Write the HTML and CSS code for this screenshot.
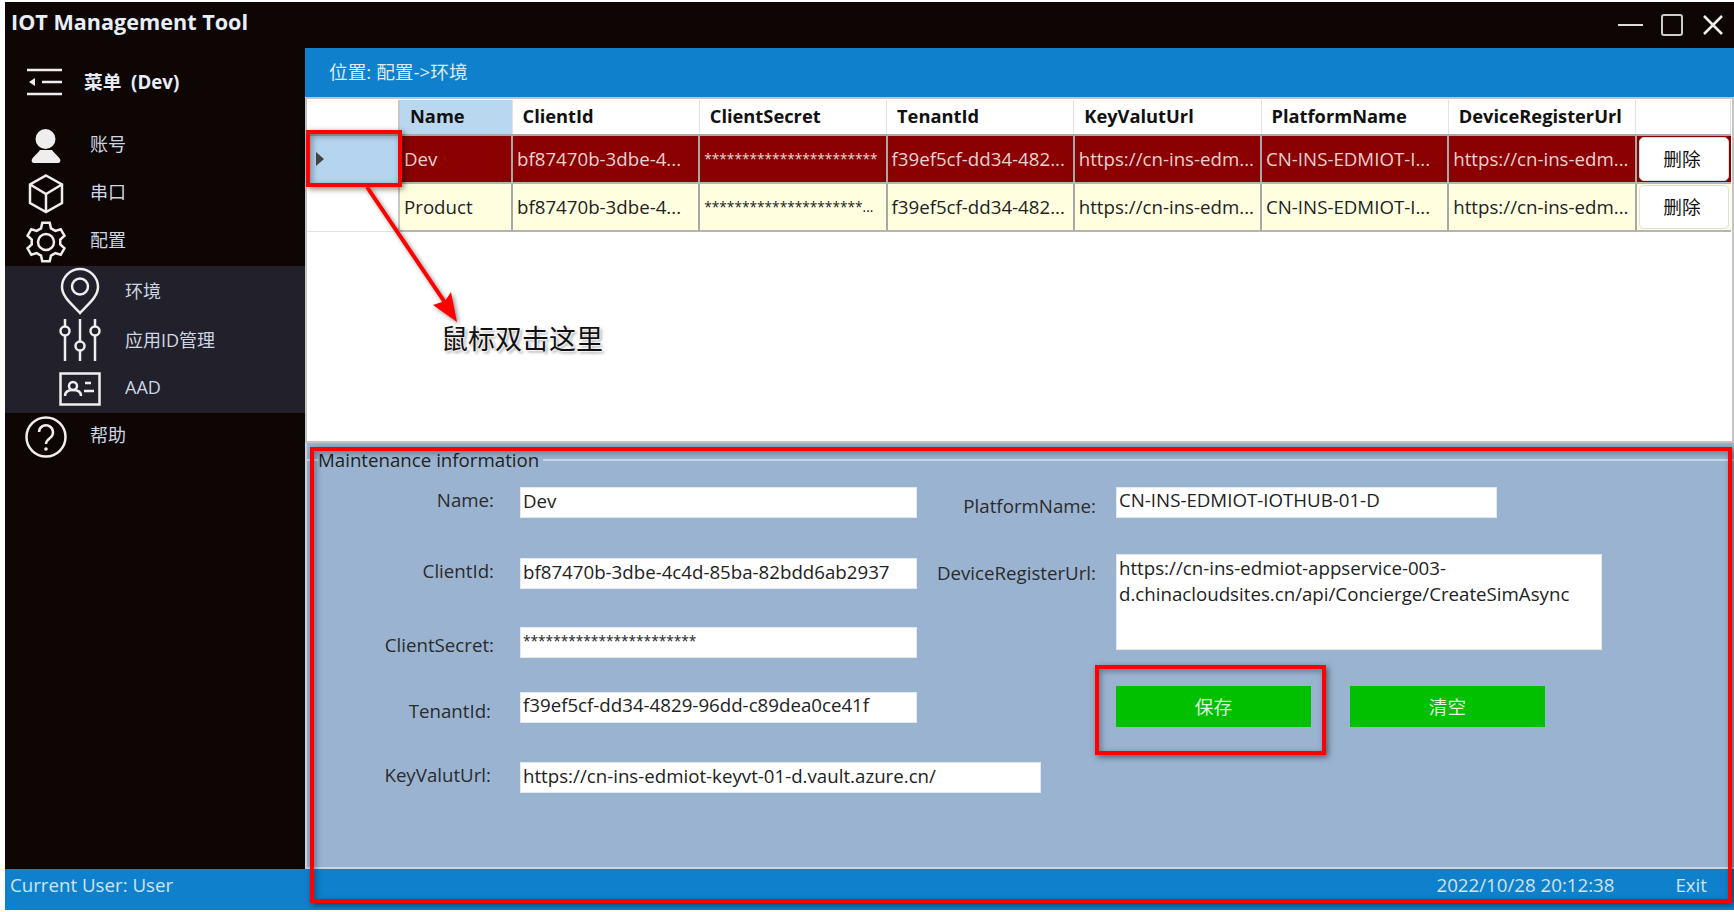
FILE: index.html
```html
<!DOCTYPE html>
<html lang="zh-CN">
<head>
    <meta charset="UTF-8">
    <title>IOT Management Tool</title>
    <link rel="stylesheet" href="styles.css">
</head>
<body>
<div class="window">
    <div class="titlebar">
        <span class="app-title">IOT Management Tool</span>
        <div class="win-btns">
            <span class="win-min"></span>
            <span class="win-max"></span>
            <svg class="win-close" width="20" height="20" viewBox="0 0 20 20"><path d="M1 1L19 19M19 1L1 19"/></svg>
        </div>
    </div>
    <div class="main">
        <!-- 左边菜单 -->
        <div class="sidebar">
            <div class="menu-head">
                <svg class="ico" width="36" height="28" viewBox="0 0 36 28"><path d="M0 2H35M15 14H35M0 26H35"/><path class="solid" d="M8 10V18L2 14z"/></svg>
                <span>菜单&nbsp;&nbsp;(Dev)</span>
            </div>
            <div class="nav-row">
                <span class="nav-ico"><svg class="ico" width="30" height="34" viewBox="0 0 30 34"><circle class="solid" cx="14.5" cy="10" r="10"/><path class="solid" d="M9 21h12c2 3 6 6 8 9 1 2 0 4-2 4H3c-2 0-3-2-2-4 2-3 6-6 8-9z"/></svg></span>
                <span class="nav-text">账号</span>
            </div>
            <div class="nav-row">
                <span class="nav-ico"><svg class="ico" width="36" height="40" viewBox="0 0 36 40"><path d="M18 1.5L34 10.5V29L18 38L2 29V10.5zM3 11L18 20L33 11M18 20V37"/></svg></span>
                <span class="nav-text">串口</span>
            </div>
            <div class="nav-row">
                <span class="nav-ico"><svg class="ico" width="44" height="44" viewBox="-22 -22 44 44"><polygon points="-4.96,-13.63 -3.72,-19.14 3.72,-19.14 4.96,-13.63 9.32,-11.11 14.72,-12.79 18.44,-6.35 14.28,-2.51 14.28,2.51 18.44,6.35 14.72,12.79 9.31,11.11 4.96,13.63 3.72,19.14 -3.72,19.14 -4.96,13.63 -9.31,11.11 -14.72,12.79 -18.44,6.35 -14.28,2.51 -14.28,-2.51 -18.44,-6.35 -14.72,-12.79 -9.32,-11.11"/><circle r="8"/></svg></span>
                <span class="nav-text">配置</span>
            </div>
            <div class="sub-nav">
                <div class="sub-row">
                    <span class="nav-ico"><svg class="ico" width="40" height="48" viewBox="0 0 40 48"><path d="M20 46C13 38 2 30 2 20A18 18 0 0 1 38 20C38 30 27 38 20 46z"/><circle cx="20" cy="19.5" r="8"/></svg></span>
                    <span>环境</span>
                </div>
                <div class="sub-row">
                    <span class="nav-ico"><svg class="ico" width="42" height="42" viewBox="0 0 42 42"><path d="M6 0V7M6 17V42M21 0V22M21 32V42M36 0V7M36 17V42"/><circle cx="6" cy="12" r="4.5"/><circle cx="21" cy="27" r="4.5"/><circle cx="36" cy="12" r="4.5"/></svg></span>
                    <span>应用ID管理</span>
                </div>
                <div class="sub-row">
                    <span class="nav-ico"><svg class="ico" width="42" height="34" viewBox="0 0 42 34"><rect x="1.5" y="1.5" width="39" height="31"/><circle cx="14" cy="14" r="4"/><path d="M6 24c0-5 4-6 8-6s8 1 8 6M26 11h6M25 19h10"/></svg></span>
                    <span class="nav-text">AAD</span>
                </div>
            </div>
            <div class="nav-row">
                <span class="nav-ico"><svg class="ico" width="42" height="42" viewBox="0 0 42 42"><circle cx="21" cy="21" r="19.5"/><path d="M14 16a7 7 0 1 1 11 6c-2 1.5-4 3-4 6"/><circle class="solid" cx="21" cy="33" r="1.8"/></svg></span>
                <span class="nav-text">帮助</span>
            </div>
        </div>

        <div class="content">
            <div class="crumb">位置: 配置-&gt;环境</div>

            <!-- 环境列表 -->
            <div class="grid-area">
                <table class="env-table">
                    <thead>
                    <tr>
                        <th class="col-head"></th>
                        <th class="name-head">Name</th>
                        <th>ClientId</th>
                        <th>ClientSecret</th>
                        <th>TenantId</th>
                        <th>KeyValutUrl</th>
                        <th>PlatformName</th>
                        <th>DeviceRegisterUrl</th>
                        <th class="col-btn"></th>
                    </tr>
                    </thead>
                    <tbody>
                    <tr class="selected">
                        <td class="row-head current"><i class="caret"></i></td>
                        <td>Dev</td>
                        <td>bf87470b-3dbe-4...</td>
                        <td class="stars">***********************</td>
                        <td>f39ef5cf-dd34-482...</td>
                        <td>https://cn-ins-edm...</td>
                        <td>CN-INS-EDMIOT-I...</td>
                        <td>https://cn-ins-edm...</td>
                        <td class="btn-cell"><button class="del-btn">删除</button></td>
                    </tr>
                    <tr>
                        <td class="row-head"></td>
                        <td>Product</td>
                        <td>bf87470b-3dbe-4...</td>
                        <td class="stars">*********************...</td>
                        <td>f39ef5cf-dd34-482...</td>
                        <td>https://cn-ins-edm...</td>
                        <td>CN-INS-EDMIOT-I...</td>
                        <td>https://cn-ins-edm...</td>
                        <td class="btn-cell"><button class="del-btn">删除</button></td>
                    </tr>
                    </tbody>
                </table>
            </div>

            <!-- 维护信息 -->
            <div class="panel">
                <fieldset class="group">
                    <legend>Maintenance information</legend>
                    <div class="form">
                        <div class="form-left">
                            <div class="field f-name"><label>Name:</label><div class="input">Dev</div></div>
                            <div class="field f-client"><label>ClientId:</label><div class="input">bf87470b-3dbe-4c4d-85ba-82bdd6ab2937</div></div>
                            <div class="field f-secret"><label>ClientSecret:</label><div class="input stars">***********************</div></div>
                            <div class="field f-tenant"><label>TenantId:</label><div class="input input-high">f39ef5cf-dd34-4829-96dd-c89dea0ce41f</div></div>
                            <div class="field f-key"><label>KeyValutUrl:</label><div class="input input-long">https://cn-ins-edmiot-keyvt-01-d.vault.azure.cn/</div></div>
                        </div>
                        <div class="form-right">
                            <div class="field f-platform"><label>PlatformName:</label><div class="input input-mid input-high">CN-INS-EDMIOT-IOTHUB-01-D</div></div>
                            <div class="field f-device"><label>DeviceRegisterUrl:</label><div class="input input-area">https://cn-ins-edmiot-appservice-003-<br>d.chinacloudsites.cn/api/Concierge/CreateSimAsync</div></div>
                            <div class="actions">
                                <button class="green-btn">保存</button>
                                <button class="green-btn">清空</button>
                            </div>
                        </div>
                    </div>
                </fieldset>
            </div>
        </div>
    </div>
    <div class="statusbar">
        <span>Current User: User</span>
        <span class="status-time">2022/10/28 20:12:38</span>
        <span class="status-exit">Exit</span>
    </div>
</div>

<!-- 截图上的红色标注 -->
<div class="mark mark-row"></div>
<div class="mark mark-panel"></div>
<div class="mark mark-save"></div>
<svg class="mark-arrow" width="120" height="150" viewBox="0 0 120 150">
    <path d="M7 7L86 124" fill="none" stroke="#f00" stroke-width="4"/>
    <polygon points="97,142 73,125 85,121 91,112" fill="#f00"/>
</svg>
<div class="mark-text">鼠标双击这里</div>
</body>
</html>
```

FILE: styles.css
```css
* {
    margin: 0;
    padding: 0;
    box-sizing: border-box;
}

body {
    position: relative;
    width: 1734px;
    height: 912px;
    overflow: hidden;
    background-color: #fff;
    font-family: "Open Sans", "Noto Sans CJK SC", sans-serif;
    font-size: 18.7px;
    line-height: 24px;
}

.window {
    display: flex;
    flex-direction: column;
    height: 908px;
    margin: 2px 0 0 5px;
}

/* 标题栏 */
.titlebar {
    display: flex;
    align-items: center;
    justify-content: space-between;
    height: 46px;
    padding: 0 11px 6px 6px;
    background-color: #0e0505;
}

.app-title {
    color: #e8eef5;
    font-size: 21.6px;
    font-weight: bold;
}

.win-btns {
    display: flex;
    align-items: center;
    gap: 18px;
    padding-top: 6px;
}

.win-min {
    width: 25px;
    height: 2px;
    background-color: #ddd;
}

.win-max {
    width: 22px;
    height: 22px;
    margin-right: 2px;
    border: 2px solid #ccc;
    border-radius: 3px;
}

.win-close path {
    stroke: #eee;
    stroke-width: 2.5;
    fill: none;
}

.main {
    display: flex;
    flex: 1;
    min-height: 0;
}

/* 菜单 */
.sidebar {
    flex: none;
    width: 300px;
    background-color: #0e0505;
    color: #ccd6e4;
    font-size: 18px;
}

.ico {
    display: block;
    fill: none;
    stroke: #eee;
    stroke-width: 2.5;
}

.ico .solid {
    fill: #eee;
    stroke: none;
}

.menu-head {
    display: flex;
    align-items: center;
    gap: 21px;
    height: 64px;
    margin-bottom: 10px;
    padding: 4px 0 0 22px;
    color: #e8eef5;
    font-size: 18.7px;
    font-weight: bold;
}

.nav-row {
    display: flex;
    align-items: center;
    height: 48px;
    padding-left: 19px;
}

.nav-ico {
    display: flex;
    justify-content: center;
    width: 44px;
    margin-right: 22px;
}

.nav-text {
    padding-bottom: 4px;
}

.sub-nav {
    height: 147px;
    background-color: #22202a;
}

.sub-row {
    display: flex;
    align-items: center;
    height: 49px;
    padding-left: 53px;
}

.sub-row .nav-ico {
    margin-right: 23px;
}

.content {
    display: flex;
    flex: 1;
    flex-direction: column;
    min-width: 0;
}

.crumb {
    height: 49px;
    padding: 12px 0 0 24px;
    background-color: #0f80cb;
    color: #dfe9f3;
}

/* 表格 */
.grid-area {
    height: 346px;
    padding: 1px 1px 0 0;
    border: solid #c4c4c4;
    border-width: 2px 2px 2px 2px;
    background-color: #fff;
}

.env-table {
    width: 1424px;
    table-layout: fixed;
    border-collapse: collapse;
    color: #222;
}

.env-table th {
    height: 35px;
    padding: 0 0 2px 10px;
    border-right: 1px solid #e2e2e2;
    border-bottom: 2px solid #a8a8a8;
    background-color: #fff;
    color: #111;
    font-size: 18.3px;
    font-weight: bold;
    text-align: left;
    white-space: nowrap;
}

.env-table th.col-head {
    width: 92px;
    border-right: 2px solid #c8c8c8;
}

.env-table th.name-head {
    width: 113px;
    background-color: #b9d8f0;
}

.env-table th.col-btn {
    width: 95px;
}

.env-table td {
    height: 48px;
    padding-left: 4px;
    overflow: hidden;
    border-right: 2px solid #a8a8a8;
    border-bottom: 2px solid #b4b4b4;
    background-color: #ffffe0;
    white-space: nowrap;
}

.selected td {
    background-color: #8b0000;
    color: #ecd2d2;
}

.env-table td.row-head {
    border-right: 2px solid #c8c8c8;
    border-bottom: 1px solid #e2e2e2;
    background-color: #fff;
}

.env-table td.current {
    background-color: #b4d4ef;
}

.caret {
    display: block;
    width: 0;
    height: 0;
    margin-left: 5px;
    border-top: 7px solid transparent;
    border-bottom: 7px solid transparent;
    border-left: 8px solid #444;
}

.env-table td.btn-cell {
    padding: 0 2px;
    border-right: 0;
}

.env-table td.stars,
.stars {
    font-size: 13.7px;
}

.del-btn {
    display: block;
    width: 90px;
    height: 44px;
    padding-right: 3px;
    border: 1px solid #ddd;
    border-radius: 5px;
    background-color: #fff;
    color: #111;
    font: inherit;
}

/* 表单 */
.panel {
    flex: 1;
    padding-top: 5px;
    border-left: 2px solid #c9d3e0;
    background-color: #9ab3d1;
}

.group {
    height: 100%;
    padding-bottom: 2px;
    border: solid #c9d6e6;
    border-width: 2px 0;
}

.group legend {
    margin-left: 11px;
    padding: 0 4px 0 0;
    color: #222;
}

.form {
    display: flex;
    margin-top: 15px;
}

.form-left {
    flex: none;
    width: 609px;
}

.field {
    display: flex;
    align-items: flex-start;
}

.field label {
    flex: none;
    color: #2b2b2b;
    text-align: right;
}

.input {
    flex: none;
    width: 397px;
    height: 31px;
    padding: 1px 2px;
    border: 1px solid #e4e9f1;
    background-color: #fff;
    color: #222;
    white-space: nowrap;
}

.input-high {
    padding-top: 0;
}

.input-long {
    width: 521px;
}

.input-mid {
    width: 381px;
}

.input-area {
    width: 486px;
    height: 96px;
    padding-top: 0;
    line-height: 26px;
}

.form-left label {
    width: 187px;
    margin: 1px 26px 0 0;
}

.f-client {
    margin-top: 40px;
}

.f-secret {
    margin-top: 38px;
}

.f-tenant {
    margin-top: 34px;
}

.f-key {
    margin-top: 39px;
}

.f-secret label {
    margin-top: 6px;
}

.f-tenant label {
    width: 184px;
    margin: 7px 29px 0 0;
}

.f-key label {
    width: 184px;
    margin-right: 29px;
}

.form-right label {
    width: 180px;
    margin: 7px 20px 0 0;
}

.f-device {
    margin-top: 36px;
}

.actions {
    display: flex;
    gap: 39px;
    margin: 36px 0 0 200px;
}

.green-btn {
    width: 195px;
    height: 41px;
    border: 0;
    background-color: #00c000;
    color: #dff5df;
    font: inherit;
}

/* 状态栏 */
.statusbar {
    display: flex;
    align-items: center;
    height: 41px;
    padding: 0 27px 10px 5px;
    background-color: #0f80cb;
    color: #cfe3f3;
}

.status-time {
    margin-left: auto;
}

.status-exit {
    margin-left: 61px;
}

/* 红色标注，盖在界面上面 */
.mark {
    position: absolute;
    border: 4px solid #f00;
    box-shadow: 2px 2px 6px rgba(0, 0, 0, 0.5), inset 2px 2px 6px rgba(0, 0, 0, 0.35);
}

.mark-row {
    left: 306px;
    top: 130px;
    width: 96px;
    height: 57px;
}

.mark-panel {
    left: 310px;
    top: 447px;
    width: 1422px;
    height: 456px;
}

.mark-save {
    left: 1095px;
    top: 665px;
    width: 231px;
    height: 90px;
}

.mark-arrow {
    position: absolute;
    left: 360px;
    top: 180px;
    filter: drop-shadow(2px 2px 2px rgba(0, 0, 0, 0.45));
}

.mark-text {
    position: absolute;
    left: 441px;
    top: 321px;
    color: #111;
    font-size: 27px;
    line-height: 36px;
    text-shadow: 0 0 2px #fff, 1px 1px 2px #fff, 2px 2px 3px rgba(0, 0, 0, 0.45);
}
```
